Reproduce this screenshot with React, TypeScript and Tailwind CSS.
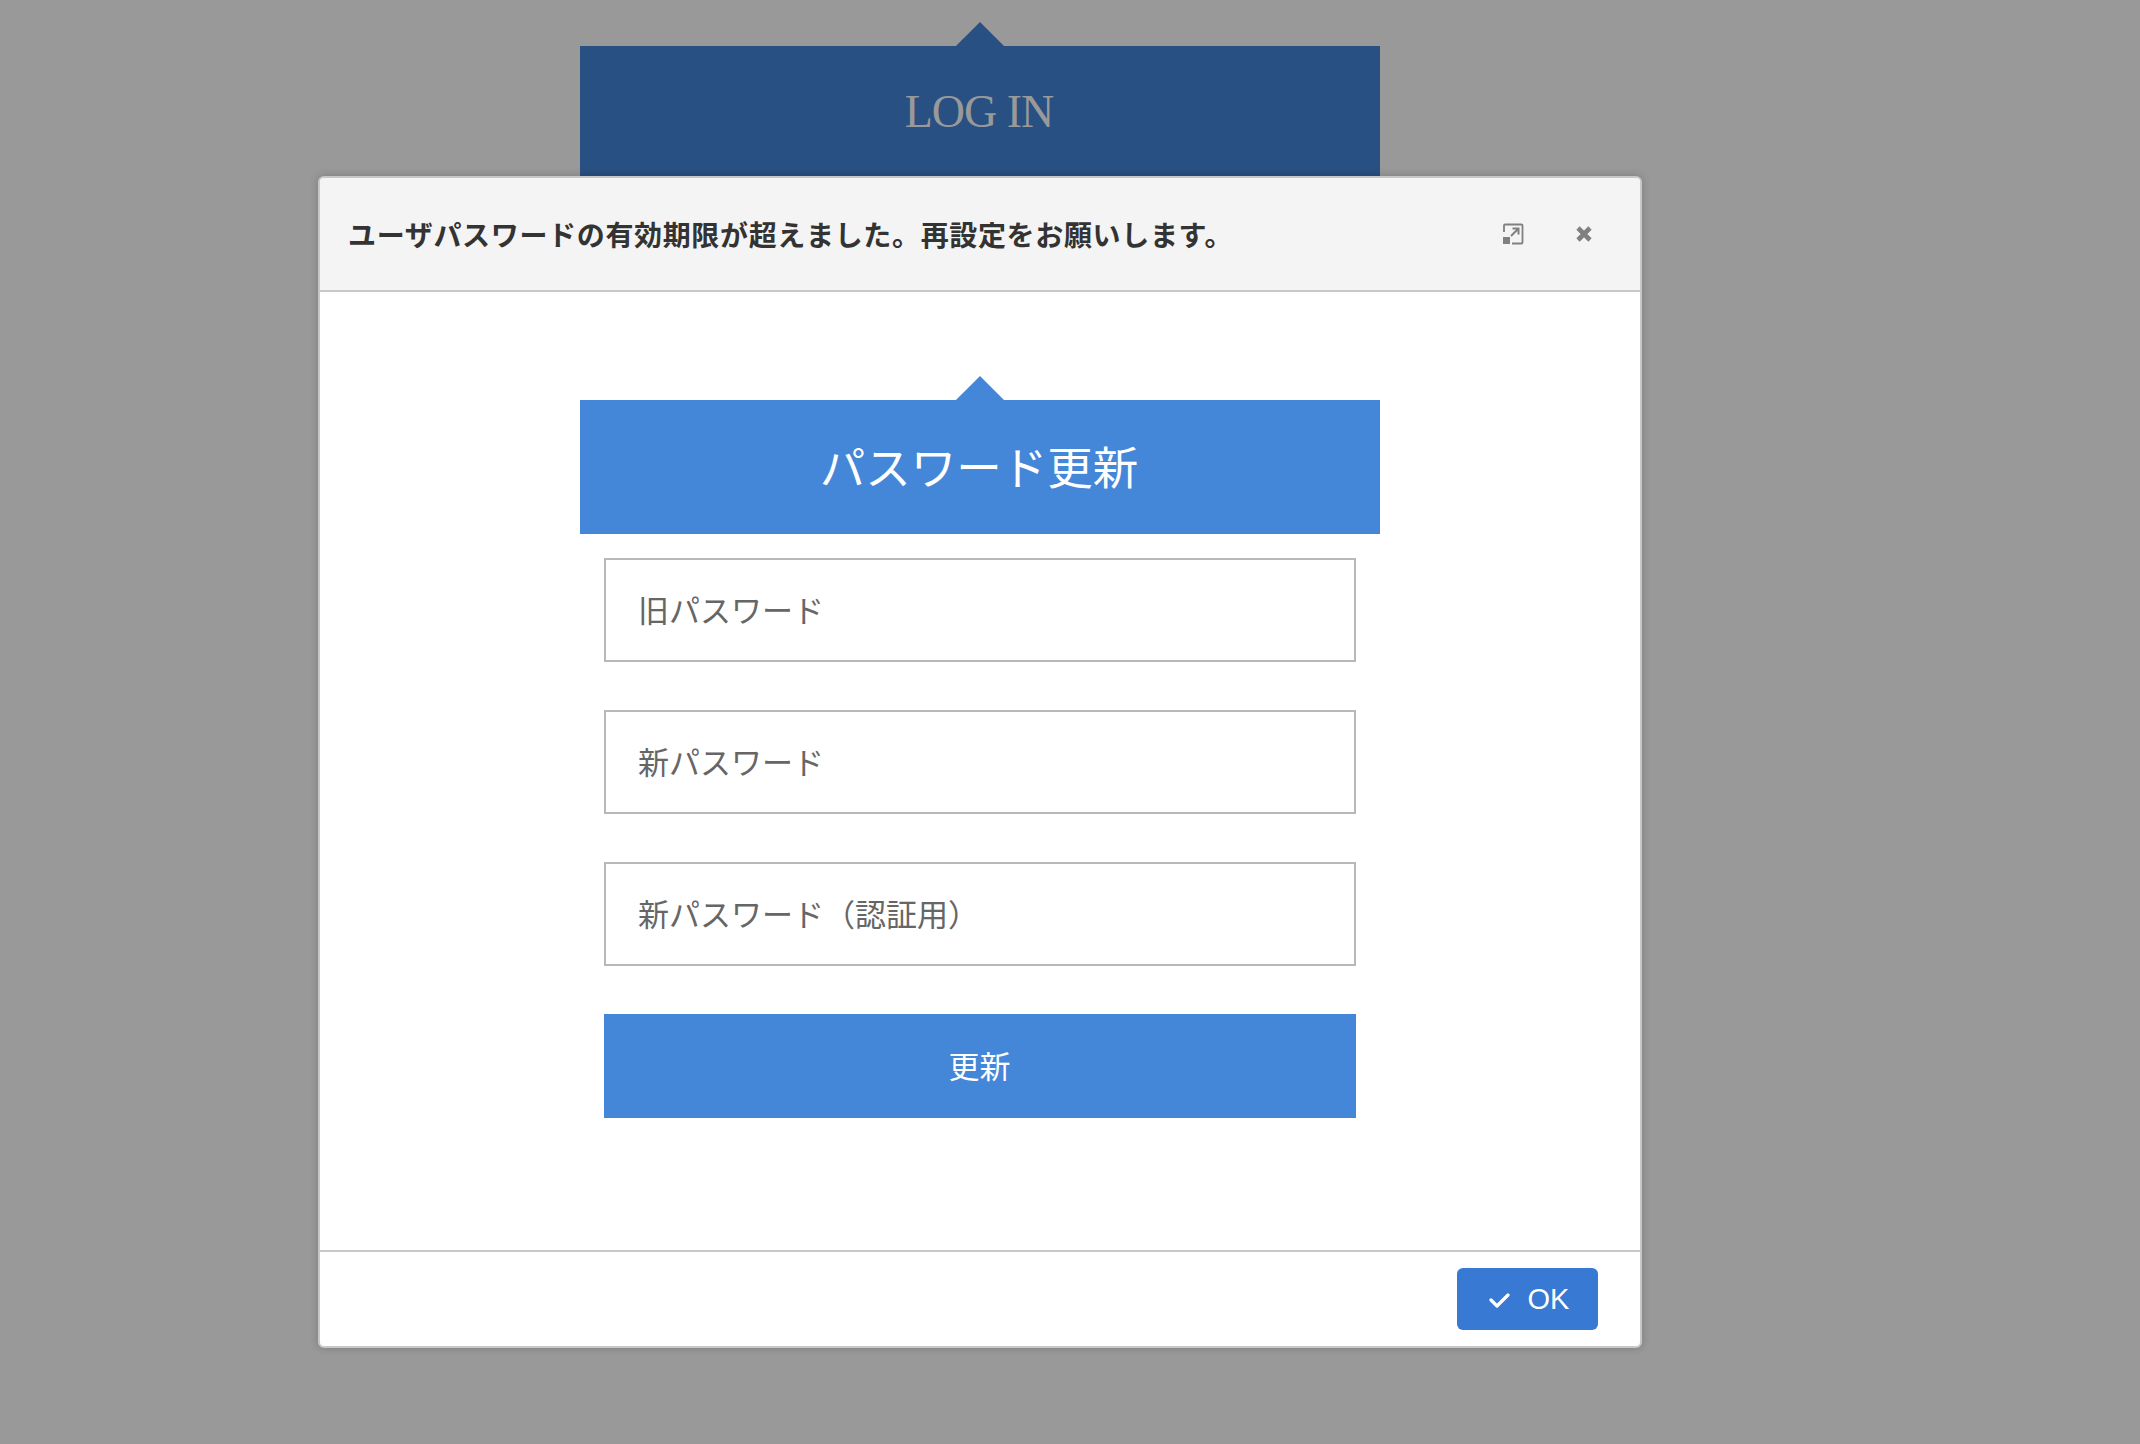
import React from 'react';

const PLACEHOLDERS = ['旧パスワード', '新パスワード', '新パスワード（認証用）'];

const Notch = ({ color }: { color: string }) => (
  <span className={`absolute left-1/2 top-[-17px] -ml-[17px] h-[34px] w-[34px] rotate-45 ${color}`} />
);

const ExpandIcon = () => (
  <svg width="22" height="22" viewBox="0 0 22 22" fill="none" className="text-[#808080]">
    <path d="M2 9V2.5Q2 1.5 3 1.5H19.5Q20.5 1.5 20.5 2.5V19.5Q20.5 20.5 19.5 20.5H10" stroke="currentColor" strokeWidth="1.8" />
    <rect x="1" y="14" width="7" height="7" fill="currentColor" />
    <path d="M9 13l6.5-6.5M10.5 5.5H16.5V11.5" stroke="currentColor" strokeWidth="2" />
  </svg>
);

const CloseIcon = () => (
  <svg width="16" height="16" viewBox="0 0 16 16" fill="none" className="text-[#808080]">
    <path d="M2 2l12 12M14 2L2 14" stroke="currentColor" strokeWidth="4.6" />
  </svg>
);

export default function App() {
  return (
    <div className="relative h-[1444px] w-[2140px] overflow-hidden bg-[#999999] font-['Noto_Sans_CJK_JP',sans-serif]">
      {/* Login panel behind the dialog */}
      <div className="relative ml-[580px] mt-[46px] h-[488px] w-[800px] bg-[#285082] pr-[2px] pt-[18px] text-center font-['Liberation_Serif',serif] text-[46px] leading-[96px] tracking-[-1px] text-[#999999]">
        <Notch color="bg-[#285082]" />
        <h1 className="relative">LOG IN</h1>
      </div>

      {/* Dialog */}
      <div className="absolute left-[318px] top-[176px] flex h-[1172px] w-[1324px] flex-col rounded-[6px] border-2 border-[#c8c8c8] bg-white shadow-[0_0_8px_rgba(0,0,0,0.2)]">
        <div className="flex h-[114px] shrink-0 items-center justify-between rounded-t-[4px] border-b-2 border-[#c8c8c8] bg-[#f4f4f4] pl-[28px] pr-[48px]">
          <span className="text-[28px] font-bold tracking-[0.66px] text-[#333333]">ユーザパスワードの有効期限が超えました。再設定をお願いします。</span>
          <div className="flex items-center gap-[52px]">
            <ExpandIcon />
            <CloseIcon />
          </div>
        </div>

        <div className="flex-1 pt-[108px]">
          <div className="mx-auto w-[800px]">
            <div className="relative flex h-[134px] items-center justify-center bg-[#4486d8] pb-[4px] pr-[2px] text-[45.5px] text-white">
              <Notch color="bg-[#4486d8]" />
              <h2 className="relative">パスワード更新</h2>
            </div>
            <form className="mt-[24px] flex flex-col gap-[48px] px-[24px]">
              {PLACEHOLDERS.map((text) => (
                <input
                  key={text}
                  type="password"
                  placeholder={text}
                  className="h-[104px] w-full border-2 border-[#b8b8b8] bg-white px-[32px] pb-[4px] text-[31px] placeholder:text-[#666666]"
                />
              ))}
              <button type="button" className="h-[104px] w-full bg-[#4486d8] pb-[2px] pr-[1px] text-[31px] text-white">
                更新
              </button>
            </form>
          </div>
        </div>

        <div className="flex h-[96px] shrink-0 items-start justify-end border-t-2 border-[#c8c8c8] pr-[42px] pt-[16px]">
          <button type="button" className="flex h-[62px] w-[141px] items-center justify-center gap-[18px] rounded-[6px] bg-[#3779d3] pl-[2px] pt-[2px] font-['Liberation_Sans',sans-serif] text-[29px] text-white">
            <svg width="22" height="16" viewBox="0 0 22 16" fill="none">
              <path d="M3 8l6 6L20 3" stroke="currentColor" strokeWidth="3.2" strokeLinecap="round" strokeLinejoin="round" />
            </svg>
            OK
          </button>
        </div>
      </div>
    </div>
  );
}
